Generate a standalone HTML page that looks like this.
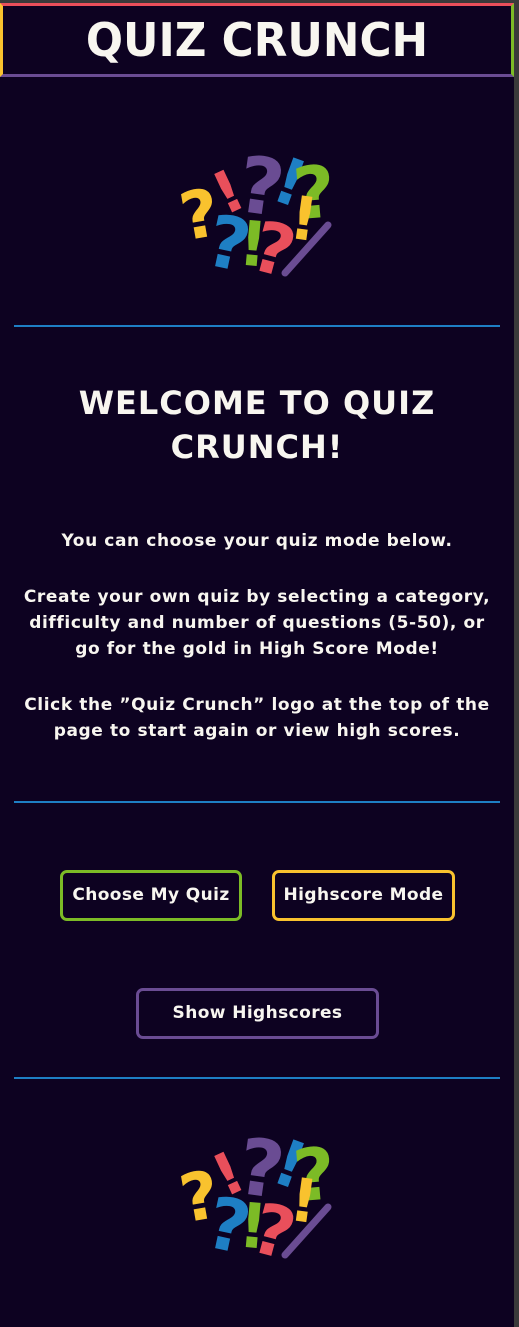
<!DOCTYPE html>
<html><head><meta charset="utf-8"><style>
*{margin:0;padding:0;box-sizing:border-box}
html,body{width:519px;height:1327px;background:#3a3a3a;overflow:hidden}
#page{position:absolute;left:0;top:3px;width:514px;height:1324px;background:#0d0221;font-family:"DejaVu Sans","Liberation Sans",sans-serif;color:#f8f6f0}
header{position:absolute;left:0;top:0;width:514px;height:74px;border-top:3px solid #e94f5b;border-left:3px solid #f9c22e;border-right:3px solid #7cbb26;border-bottom:3px solid #6a4c93;text-align:center}
header h1{font-size:46px;font-weight:bold;line-height:68px;letter-spacing:0px;font-family:"DejaVu Sans",sans-serif;transform:scaleX(0.95)}
.hr{position:absolute;left:14px;width:486px;height:2px;background:#1e7fc4}
.logo{position:absolute;left:175px;width:165px;height:140px}
h2{position:absolute;top:378px;left:0;width:514px;text-align:center;font-size:32px;line-height:44px;font-weight:bold;letter-spacing:1px}
.p{position:absolute;left:0;width:514px;text-align:center;font-size:17px;font-weight:bold;line-height:26px;letter-spacing:.6px}
.btn{position:absolute;height:51px;border:3px solid;border-radius:7px;font-size:17px;font-weight:bold;text-align:center;line-height:45px;letter-spacing:.4px}
</style></head><body><div id="page">
<header><h1>QUIZ CRUNCH</h1></header>
<svg class="logo" style="top:140px" viewBox="0 0 165 140" font-family="DejaVu Sans" font-weight="bold">
<g id="lg">
<text x="5" y="95" font-size="66" fill="#f9c22e" transform="rotate(-10 22 70)">?</text>
<text x="38" y="70" font-size="58" fill="#e94f5b" transform="rotate(-25 50 45)">!</text>
<text x="64" y="70" font-size="78" fill="#6a4c93" transform="rotate(8 82 40)">?</text>
<text x="34" y="125" font-size="72" fill="#1e7fc4" transform="rotate(12 52 95)">?</text>
<text x="102" y="60" font-size="64" fill="#1e7fc4" transform="rotate(20 112 35)">!</text>
<text x="118" y="75" font-size="72" fill="#7cbb26" transform="rotate(-5 137 45)">?</text>
<text x="116" y="96" font-size="60" fill="#f9c22e" transform="rotate(8 125 70)">!</text>
<text x="64" y="122" font-size="62" fill="#7cbb26" transform="rotate(5 72 100)">!</text>
<text x="80" y="130" font-size="70" fill="#e94f5b" transform="rotate(15 97 100)">?</text>
<path d="M153 82 L110 130" stroke="#6a4c93" stroke-width="7" stroke-linecap="round"/>
</g>
</svg>
<div class="hr" style="top:322px"></div>
<h2>WELCOME TO QUIZ<br>CRUNCH!</h2>
<div class="p" style="top:525px">You can choose your quiz mode below.</div>
<div class="p" style="top:581px">Create your own quiz by selecting a category,<br>difficulty and number of questions (5-50), or<br>go for the gold in High Score Mode!</div>
<div class="p" style="top:689px">Click the ”Quiz Crunch” logo at the top of the<br>page to start again or view high scores.</div>
<div class="hr" style="top:798px"></div>
<div class="btn" style="left:60px;top:867px;width:182px;border-color:#7cbb26">Choose My Quiz</div>
<div class="btn" style="left:272px;top:867px;width:183px;border-color:#f9c22e">Highscore Mode</div>
<div class="btn" style="left:136px;top:985px;width:243px;border-color:#6a4c93">Show Highscores</div>
<div class="hr" style="top:1074px"></div>
<svg class="logo" style="top:1122px" viewBox="0 0 165 140" font-family="DejaVu Sans" font-weight="bold">
<text x="5" y="95" font-size="66" fill="#f9c22e" transform="rotate(-10 22 70)">?</text>
<text x="38" y="70" font-size="58" fill="#e94f5b" transform="rotate(-25 50 45)">!</text>
<text x="64" y="70" font-size="78" fill="#6a4c93" transform="rotate(8 82 40)">?</text>
<text x="34" y="125" font-size="72" fill="#1e7fc4" transform="rotate(12 52 95)">?</text>
<text x="102" y="60" font-size="64" fill="#1e7fc4" transform="rotate(20 112 35)">!</text>
<text x="118" y="75" font-size="72" fill="#7cbb26" transform="rotate(-5 137 45)">?</text>
<text x="116" y="96" font-size="60" fill="#f9c22e" transform="rotate(8 125 70)">!</text>
<text x="64" y="122" font-size="62" fill="#7cbb26" transform="rotate(5 72 100)">!</text>
<text x="80" y="130" font-size="70" fill="#e94f5b" transform="rotate(15 97 100)">?</text>
<path d="M153 82 L110 130" stroke="#6a4c93" stroke-width="7" stroke-linecap="round"/>
</svg>
</div></body></html>
